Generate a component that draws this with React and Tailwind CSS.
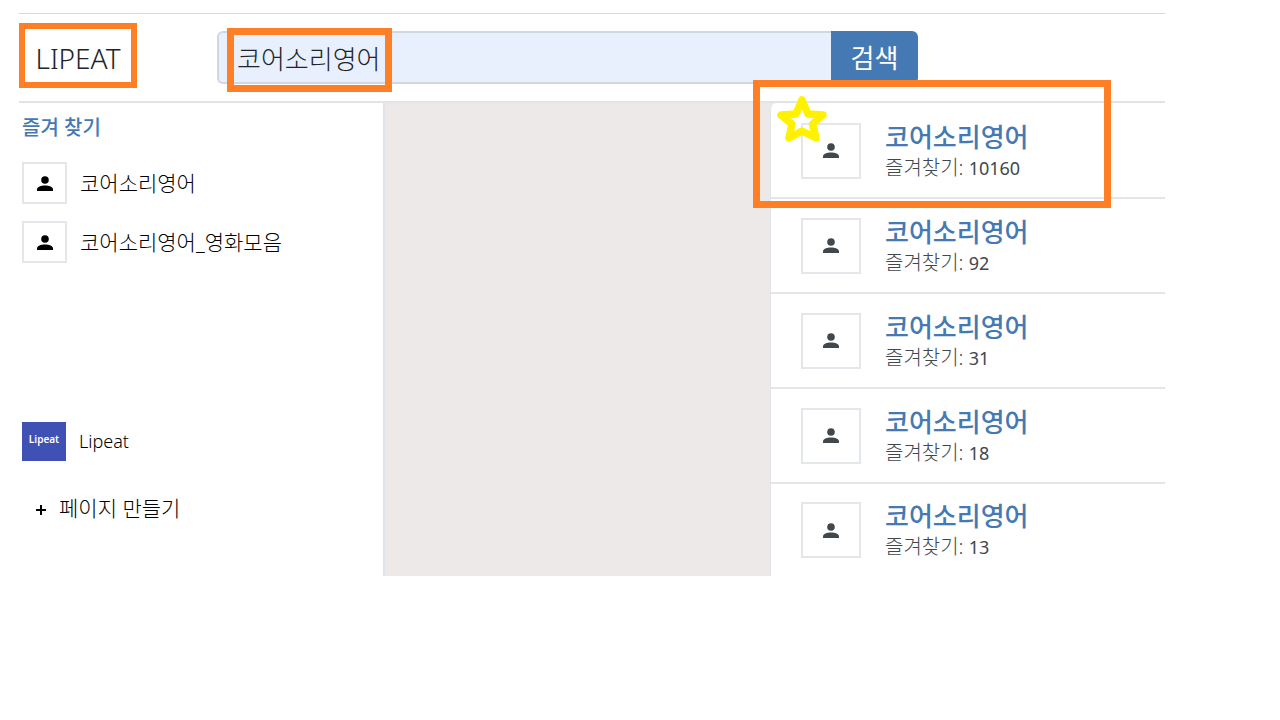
import React, { useState } from 'react';

const favorites = ['코어소리영어', '코어소리영어_영화모음'];

const results = [
    { title: '코어소리영어', count: 10160, featured: true },
    { title: '코어소리영어', count: 92 },
    { title: '코어소리영어', count: 31 },
    { title: '코어소리영어', count: 18 },
    { title: '코어소리영어', count: 13 },
];

const PersonIcon = () => (
    <svg viewBox="0 0 16 15" className="w-4 h-[15px]" fill="currentColor" aria-hidden="true">
        <circle cx="8" cy="4" r="3.8" />
        <path d="M0 15v-1.6C0 10.6 4 9.4 8 9.4s8 1.2 8 4V15z" />
    </svg>
);

const StarMark = () => (
    <svg
        viewBox="0 0 50 48"
        className="absolute left-[6px] top-[-9px] w-[50px] h-12"
        fill="none"
        stroke="#fff200"
        strokeWidth="7.5"
        strokeLinejoin="round"
        aria-hidden="true"
    >
        <path d="M25 5L31 19L46 20L35.5 29L39 43L25 36L12 43L15 29L4 20L19 19z" />
    </svg>
);

const ResultRow = ({ title, count, featured }) => (
    <li className="relative flex h-[95px] items-center border-b-2 border-[#e3e5e7] pl-[30px] last:border-b-0 last:h-[92px]">
        <div className="flex h-14 w-[60px] shrink-0 items-center justify-center border-2 border-[#e3e6ea] text-[#40474e]">
            <PersonIcon />
        </div>
        <div className="mt-0.5 ml-6 whitespace-nowrap">
            <a href="#" className="block text-[26px] leading-8 font-medium text-[#4479b3]">{title}</a>
            <p className="text-[20px] leading-[30px] font-light text-[#40474e]">
                즐겨찾기: <span className="text-[18px] font-normal">{count}</span>
            </p>
        </div>
        {featured && (
            <>
                <StarMark />
                <div className="pointer-events-none absolute left-[-18px] right-[54px] top-[-24px] h-32 border-[7px] border-[#ff7f27]" />
            </>
        )}
    </li>
);

const App = () => {
    const [query, setQuery] = useState('코어소리영어');

    return (
        <div className="bg-white pt-[13px] pl-[19px] pr-[115px] font-['Noto_Sans','Noto_Sans_CJK_KR',sans-serif] text-black">
            <header className="flex items-start border-t border-b-2 border-t-[#d6d8da] border-b-[#e1e4e8] pt-[9px] pb-[13px]">
                <a href="#" className="flex h-[65px] w-[118px] items-center justify-center border-[6px] border-[#ff7f27] pt-1 text-[28px] font-light text-[#212529]">
                    LIPEAT
                </a>
                <form className="relative mt-2 mr-[247px] ml-20 flex h-[53px] flex-1" onSubmit={(e) => e.preventDefault()}>
                    <input
                        type="text"
                        aria-label="검색어"
                        value={query}
                        onChange={(e) => setQuery(e.target.value)}
                        className="min-w-0 flex-1 rounded-l-md border-2 border-r-0 border-[#d0d7df] bg-[#e8f0fe] pt-1 pl-[18px] text-[26px] font-light text-[#212529] outline-none"
                    />
                    <button type="submit" className="w-[87px] rounded-r-md bg-[#4479b3] pt-0.5 text-[26px] text-white">
                        검색
                    </button>
                    <div className="pointer-events-none absolute left-[10px] top-[-3px] h-16 w-[165px] border-[7px] border-[#ff7f27]" />
                </form>
            </header>

            <main className="grid grid-cols-[364fr_387fr_395fr]">
                <nav className="pl-[3px] pt-2">
                    <h2 className="text-[20px] leading-[34px] font-medium text-[#4479b3]">즐겨 찾기</h2>
                    <ul className="mt-[17px] space-y-[17px]">
                        {favorites.map((name) => (
                            <li key={name}>
                                <a href="#" className="flex items-center text-[21px] leading-[42px] font-light">
                                    <span className="mr-[13px] flex h-[42px] w-[45px] items-center justify-center border-2 border-[#e3e6ea]">
                                        <PersonIcon />
                                    </span>
                                    {name}
                                </a>
                            </li>
                        ))}
                    </ul>
                    <a href="#" className="mt-[159px] flex items-center text-[18px] leading-[39px] font-light">
                        <span className="mr-[13px] flex h-[39px] w-11 items-center justify-center bg-[#3f51b5] pb-1 text-[10px] font-semibold text-white">
                            Lipeat
                        </span>
                        Lipeat
                    </a>
                    <button type="button" className="mt-[31px] ml-[13px] flex items-center text-[21px] leading-8 font-light">
                        <svg viewBox="0 0 12 12" className="mt-1 mr-3 h-3 w-3" stroke="currentColor" strokeWidth="2" aria-hidden="true">
                            <path d="M1 6h10M6 1v10" />
                        </svg>
                        페이지 만들기
                    </button>
                </nav>
                <div className="border-l-2 border-[#e1e4e8] bg-[#ede9e8]" />
                <div className="bg-[#ede9e8]">
                    <ul className="rounded-tl-md border-l border-[#e1e4e8] bg-white pt-px">
                        {results.map((item, index) => (
                            <ResultRow key={index} {...item} />
                        ))}
                    </ul>
                </div>
            </main>
        </div>
    );
};

export default App;
